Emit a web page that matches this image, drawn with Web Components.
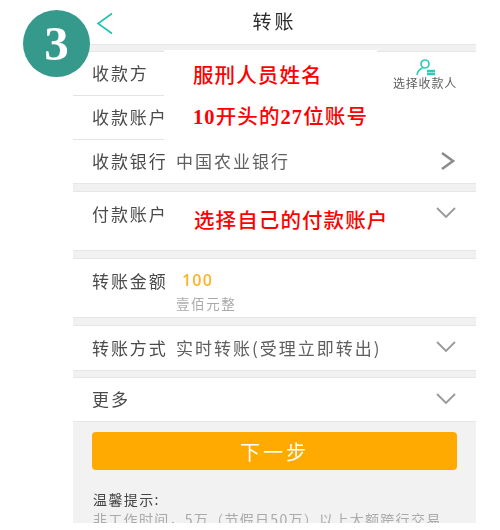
<!DOCTYPE html>
<html lang="zh">
<head>
<meta charset="utf-8">
<title>转账</title>
<style>
    html, body { margin: 0; background: #fff; }
    body { font-family: "Noto Sans CJK SC", "Noto Sans", sans-serif; height: 530px; overflow: hidden; }
    .val { color: #5f5f5f; letter-spacing: 2px; }
    .chev { display: block; }
</style>
</head>
<body>
<transfer-screen>
    <step-badge slot="over">3</step-badge>

    <top-bar>转账</top-bar>
    <gray-gap style="height:8px"></gray-gap>

    <form-row label="收款方" rule height="43">
        <payee-button slot="end">选择收款人</payee-button>
    </form-row>
    <form-row label="收款账户" rule height="43"></form-row>
    <form-row label="收款银行" height="43">
        <span class="val">中国农业银行</span>
        <svg slot="end" class="chev" width="16" height="20" viewBox="0 0 16 20" fill="none" stroke="#8c8c8c" stroke-width="2.6"><path d="M2 2 L13 10 L2 18"/></svg>
    </form-row>
    <gray-gap></gray-gap>

    <form-row label="付款账户" height="58" top>
        <svg slot="end" class="chev drop" style="margin-top:6px" width="20" height="12" viewBox="0 0 20 12" fill="none" stroke="#999" stroke-width="1.8"><path d="M1 1 L10 10 L19 1"/></svg>
    </form-row>
    <gray-gap></gray-gap>

    <form-row label="转账金额" height="58" top>
        <amount-value sub="壹佰元整">100</amount-value>
    </form-row>
    <gray-gap></gray-gap>

    <form-row label="转账方式" height="44">
        <span class="val">实时转账(受理立即转出)</span>
        <svg slot="end" class="chev" width="20" height="12" viewBox="0 0 20 12" fill="none" stroke="#999" stroke-width="1.8"><path d="M1 1 L10 10 L19 1"/></svg>
    </form-row>
    <gray-gap style="height:8px"></gray-gap>

    <form-row label="更多" height="43">
        <svg slot="end" class="chev" width="20" height="12" viewBox="0 0 20 12" fill="none" stroke="#999" stroke-width="1.8"><path d="M1 1 L10 10 L19 1"/></svg>
    </form-row>

    <tips-panel title="温馨提示:" text="非工作时间，5万（节假日50万）以上大额跨行交易">下一步</tips-panel>

    <red-note slot="over" x="120" y="62">服刑人员姓名</red-note>
    <red-note slot="over" x="120" y="103"><b>10</b>开头的<b>27</b>位账号</red-note>
    <red-note slot="over" x="121" y="207">选择自己的付款账户</red-note>
</transfer-screen>

<script>
class TransferScreen extends HTMLElement {
    constructor() {
        super();
        this.attachShadow({ mode: "open" }).innerHTML = `
            <style>
                :host { display: block; position: relative; width: 500px; height: 530px; }
                .column {
                    display: flex; flex-direction: column;
                    width: 403px; height: 523px; margin-left: 73px;
                    overflow: hidden; filter: blur(0.35px);
                }
                /* white patch pasted over the screenshot, eats a bit of the gray bar */
                .patch { position: absolute; left: 164px; top: 50px; width: 213px; height: 4px; background: #fff; }
            </style>
            <div class="column"><slot></slot></div>
            <div class="patch"></div>
            <slot name="over"></slot>
        `;
    }
}

class StepBadge extends HTMLElement {
    constructor() {
        super();
        this.attachShadow({ mode: "open" }).innerHTML = `
            <style>
                :host {
                    position: absolute; left: 23px; top: 10px;
                    width: 67px; height: 67px; border-radius: 50%;
                    background: #359a8b; color: #fff;
                    display: flex; align-items: center; justify-content: center;
                    font: bold 49px/1 "Liberation Serif", serif;
                }
            </style>
            <slot></slot>
        `;
    }
}

class TopBar extends HTMLElement {
    constructor() {
        super();
        this.attachShadow({ mode: "open" }).innerHTML = `
            <style>
                :host {
                    display: flex; align-items: center; justify-content: center;
                    position: relative; flex: none; height: 44px; box-sizing: border-box;
                    padding-bottom: 4px;
                    background: #fff; color: #2b2b2b;
                    font-size: 19px; letter-spacing: 3px;
                }
                svg { position: absolute; left: 23px; top: 12px; }
            </style>
            <svg width="18" height="23" viewBox="0 0 18 23" fill="none" stroke="#1cc5ad" stroke-width="1.6"><path d="M16 1.5 L2 11.5 L16 21.5"/></svg>
            <slot></slot>
        `;
    }
}

class GrayGap extends HTMLElement {
    constructor() {
        super();
        this.attachShadow({ mode: "open" }).innerHTML = `
            <style>
                :host {
                    display: block; flex: none; height: 9px; box-sizing: border-box;
                    background: #f1f1f1;
                    border-top: 1px solid #e6e6e6; border-bottom: 1px solid #e6e6e6;
                }
            </style>
        `;
    }
}

class FormRow extends HTMLElement {
    constructor() {
        super();
        this.attachShadow({ mode: "open" }).innerHTML = `
            <style>
                :host { display: block; flex: none; background: #fff; color: #4a4a4a; font-size: 17px; }
                .line {
                    display: flex; align-items: center; box-sizing: border-box;
                    padding: 0 20px 2px 19px; height: 100%;
                }
                :host([top]) .line { align-items: flex-start; padding-top: 9px; }
                .label { width: 84px; flex: none; letter-spacing: 1.9px; white-space: nowrap; }
                .main { flex: 1; white-space: nowrap; }
                .rule { width: 91px; height: 1px; background: #e4e4e4; display: none; }
                :host([rule]) .rule { display: block; }
                ::slotted([slot=end]) { flex: none; }
            </style>
            <div class="line">
                <span class="label"></span>
                <div class="main"><slot></slot></div>
                <slot name="end"></slot>
            </div>
            <div class="rule"></div>
        `;
    }
    connectedCallback() {
        const h = parseInt(this.getAttribute("height"));
        this.style.height = (h + (this.hasAttribute("rule") ? 1 : 0)) + "px";
        this.shadowRoot.querySelector(".label").textContent = this.getAttribute("label");
        this.shadowRoot.querySelector(".line").style.height = h + "px";
    }
}

class PayeeButton extends HTMLElement {
    constructor() {
        super();
        this.attachShadow({ mode: "open" }).innerHTML = `
            <style>
                :host {
                    display: flex; flex-direction: column; align-items: center;
                    margin-top: 3px; margin-right: -1px; color: #5f5f5f;
                    font-size: 12px; line-height: 14px; letter-spacing: 0.8px;
                }
                svg { display: block; margin-left: 3px; }
            </style>
            <svg width="20" height="17" viewBox="0 0 20 17" fill="none" stroke="#2ccdb5" stroke-width="1.7">
                <circle cx="9" cy="5" r="4"/>
                <path d="M1 16 C1.5 11.5 4 10 6.5 9"/>
                <path d="M11 12 H19 M11 15 H19" stroke-width="2.4"/>
            </svg>
            <slot></slot>
        `;
    }
}

class AmountValue extends HTMLElement {
    constructor() {
        super();
        this.attachShadow({ mode: "open" }).innerHTML = `
            <style>
                :host { display: block; }
                .amount { color: #fdb42a; font: 600 16px/25px "Open Sans", sans-serif; letter-spacing: 1.2px; padding-left: 6px; }
                .sub { color: #aaa; font-size: 13.5px; line-height: 20px; letter-spacing: 1.6px; }
            </style>
            <div class="amount"><slot></slot></div>
            <div class="sub"></div>
        `;
    }
    connectedCallback() {
        this.shadowRoot.querySelector(".sub").textContent = this.getAttribute("sub");
    }
}

class TipsPanel extends HTMLElement {
    constructor() {
        super();
        this.attachShadow({ mode: "open" }).innerHTML = `
            <style>
                :host {
                    display: flex; flex-direction: column; flex: 1;
                    background: #f2f2f2; border-top: 1px solid #e6e6e6;
                    padding: 10px 19px 0 20px; overflow: hidden;
                }
                .next {
                    display: flex; align-items: center; justify-content: center; flex: none;
                    height: 38px; width: 365px; margin-left: -1px; border-radius: 4px;
                    background: #ffaa00; color: #fff;
                    font-size: 20px; letter-spacing: 3px;
                }
                .title { margin-top: 19px; color: #444; font-size: 14px; line-height: 20px; letter-spacing: 1.4px; }
                .text { color: #aaa; font-size: 14px; line-height: 20px; white-space: nowrap; letter-spacing: 1.3px; }
            </style>
            <div class="next"><slot></slot></div>
            <div class="title"></div>
            <div class="text"></div>
        `;
    }
    connectedCallback() {
        this.shadowRoot.querySelector(".title").textContent = this.getAttribute("title");
        this.shadowRoot.querySelector(".text").textContent = this.getAttribute("text");
    }
}

// red captions written on top of the screenshot
class RedNote extends HTMLElement {
    constructor() {
        super();
        this.attachShadow({ mode: "open" }).innerHTML = `
            <style>
                :host {
                    position: absolute; color: #f00; white-space: nowrap;
                    font: 500 20.5px/28px "Liberation Serif", "Noto Sans CJK SC", serif;
                    letter-spacing: 1.1px;
                }
            </style>
            <slot></slot>
        `;
    }
    connectedCallback() {
        this.style.left = (73 + parseInt(this.getAttribute("x"))) + "px";
        this.style.top = this.getAttribute("y") + "px";
    }
}

customElements.define("transfer-screen", TransferScreen);
customElements.define("step-badge", StepBadge);
customElements.define("top-bar", TopBar);
customElements.define("gray-gap", GrayGap);
customElements.define("form-row", FormRow);
customElements.define("payee-button", PayeeButton);
customElements.define("amount-value", AmountValue);
customElements.define("tips-panel", TipsPanel);
customElements.define("red-note", RedNote);
</script>
</body>
</html>
